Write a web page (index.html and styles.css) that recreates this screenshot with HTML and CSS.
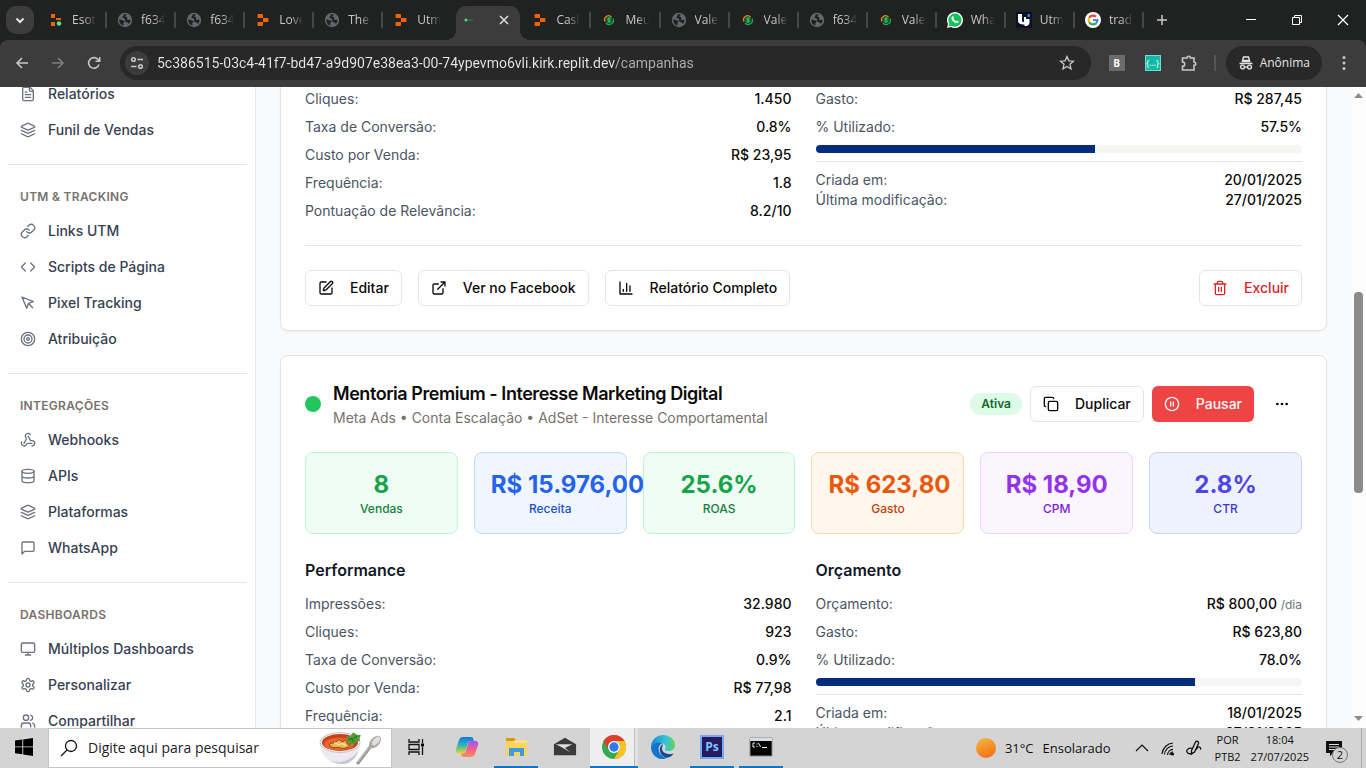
FILE: index.html
```html
<!DOCTYPE html>
<html lang="pt-BR">
<head>
<meta charset="utf-8">
<meta name="viewport" content="width=device-width, initial-scale=1">
<title>Campanhas</title>
<link rel="stylesheet" href="styles.css">
</head>
<body>
<svg class="sprite" aria-hidden="true">
  <symbol id="i-file" viewBox="0 0 24 24"><path d="M15 2H6a2 2 0 0 0-2 2v16a2 2 0 0 0 2 2h12a2 2 0 0 0 2-2V7Z"/><path d="M14 2v4a2 2 0 0 0 2 2h4M10 9H8M16 13H8M16 17H8"/></symbol>
  <symbol id="i-layers" viewBox="0 0 24 24"><path d="m12.83 2.18a2 2 0 0 0-1.66 0L2.6 6.08a1 1 0 0 0 0 1.83l8.58 3.91a2 2 0 0 0 1.66 0l8.58-3.9a1 1 0 0 0 0-1.83Z"/><path d="m22 17.65-9.17 4.16a2 2 0 0 1-1.66 0L2 17.65M22 12.65l-9.17 4.16a2 2 0 0 1-1.66 0L2 12.65"/></symbol>
  <symbol id="i-link" viewBox="0 0 24 24"><path d="M10 13a5 5 0 0 0 7.54.54l3-3a5 5 0 0 0-7.07-7.07l-1.72 1.71"/><path d="M14 11a5 5 0 0 0-7.54-.54l-3 3a5 5 0 0 0 7.07 7.07l1.71-1.71"/></symbol>
  <symbol id="i-code" viewBox="0 0 24 24"><path d="m16 18 6-6-6-6M8 6l-6 6 6 6"/></symbol>
  <symbol id="i-pointer" viewBox="0 0 24 24"><path d="m3 3 7.07 16.97 2.51-7.39 7.39-2.51L3 3zM13 13l6 6"/></symbol>
  <symbol id="i-target" viewBox="0 0 24 24"><circle cx="12" cy="12" r="10"/><circle cx="12" cy="12" r="6"/><circle cx="12" cy="12" r="2"/></symbol>
  <symbol id="i-webhook" viewBox="0 0 24 24"><path d="M18 16.98h-5.99c-1.1 0-1.95.94-2.48 1.9A4 4 0 0 1 2 17c.01-.7.2-1.4.57-2"/><path d="m6 17 3.13-5.78c.53-.97.1-2.18-.5-3.1a4 4 0 1 1 6.89-4.06"/><path d="m12 6 3.13 5.73C15.66 12.7 16.9 13 18 13a4 4 0 0 1 0 8"/></symbol>
  <symbol id="i-database" viewBox="0 0 24 24"><ellipse cx="12" cy="5" rx="9" ry="3"/><path d="M3 5V19A9 3 0 0 0 21 19V5M3 12A9 3 0 0 0 21 12"/></symbol>
  <symbol id="i-message" viewBox="0 0 24 24"><path d="M21 15a2 2 0 0 1-2 2H7l-4 4V5a2 2 0 0 1 2-2h14a2 2 0 0 1 2 2z"/></symbol>
  <symbol id="i-monitor" viewBox="0 0 24 24"><rect x="2" y="3" width="20" height="14" rx="2"/><path d="M8 21h8M12 17v4"/></symbol>
  <symbol id="i-settings" viewBox="0 0 24 24"><path d="M12.22 2h-.44a2 2 0 0 0-2 2v.18a2 2 0 0 1-1 1.73l-.43.25a2 2 0 0 1-2 0l-.15-.08a2 2 0 0 0-2.73.73l-.22.38a2 2 0 0 0 .73 2.73l.15.1a2 2 0 0 1 1 1.72v.51a2 2 0 0 1-1 1.74l-.15.09a2 2 0 0 0-.73 2.73l.22.38a2 2 0 0 0 2.73.73l.15-.08a2 2 0 0 1 2 0l.43.25a2 2 0 0 1 1 1.73V20a2 2 0 0 0 2 2h.44a2 2 0 0 0 2-2v-.18a2 2 0 0 1 1-1.73l.43-.25a2 2 0 0 1 2 0l.15.08a2 2 0 0 0 2.73-.73l.22-.39a2 2 0 0 0-.73-2.73l-.15-.08a2 2 0 0 1-1-1.74v-.5a2 2 0 0 1 1-1.74l.15-.09a2 2 0 0 0 .73-2.73l-.22-.38a2 2 0 0 0-2.73-.73l-.15.08a2 2 0 0 1-2 0l-.43-.25a2 2 0 0 1-1-1.73V4a2 2 0 0 0-2-2z"/><circle cx="12" cy="12" r="3"/></symbol>
  <symbol id="i-users" viewBox="0 0 24 24"><path d="M16 21v-2a4 4 0 0 0-4-4H6a4 4 0 0 0-4 4v2M22 21v-2a4 4 0 0 0-3-3.87M16 3.13a4 4 0 0 1 0 7.75"/><circle cx="9" cy="7" r="4"/></symbol>
  <symbol id="i-edit" viewBox="0 0 24 24"><path d="M12 3H5a2 2 0 0 0-2 2v14a2 2 0 0 0 2 2h14a2 2 0 0 0 2-2v-7"/><path d="M18.375 2.625a1 1 0 0 1 3 3l-9.013 9.014a2 2 0 0 1-.853.505l-2.873.84a.5.5 0 0 1-.62-.62l.84-2.873a2 2 0 0 1 .506-.852z"/></symbol>
  <symbol id="i-external" viewBox="0 0 24 24"><path d="M15 3h6v6M10 14 21 3M18 13v6a2 2 0 0 1-2 2H5a2 2 0 0 1-2-2V8a2 2 0 0 1 2-2h6"/></symbol>
  <symbol id="i-chart" viewBox="0 0 24 24"><path d="M3 3v18h18M18 17V9M13 17V5M8 17v-3"/></symbol>
  <symbol id="i-trash" viewBox="0 0 24 24"><path d="M3 6h18M19 6v14c0 1-1 2-2 2H7c-1 0-2-1-2-2V6M8 6V4c0-1 1-2 2-2h4c1 0 2 1 2 2v2M10 11v6M14 11v6"/></symbol>
  <symbol id="i-copy" viewBox="0 0 24 24"><rect x="8" y="8" width="14" height="14" rx="2"/><path d="M4 16c-1.1 0-2-.9-2-2V4c0-1.1.9-2 2-2h10c1.1 0 2 .9 2 2"/></symbol>
  <symbol id="i-pause" viewBox="0 0 24 24"><circle cx="12" cy="12" r="10"/><path d="M10 15V9M14 15V9"/></symbol>
  <symbol id="i-more" viewBox="0 0 24 24"><circle cx="12" cy="12" r="1"/><circle cx="19" cy="12" r="1"/><circle cx="5" cy="12" r="1"/></symbol>
  <symbol id="f-replit" viewBox="0 0 16 16"><path fill="#f26207" d="M3.500 2h3.500a1 1 0 0 1 1 1v3H3.500a1 1 0 0 1-1-1V3a1 1 0 0 1 1-1ZM8 6h4.500a1 1 0 0 1 1 1v2a1 1 0 0 1-1 1H8ZM3.500 10H8v3a1 1 0 0 1-1 1H3.500a1 1 0 0 1-1-1v-2a1 1 0 0 1 1-1Z"/></symbol>
  <symbol id="f-replit-on" viewBox="0 0 16 16"><path fill="#f26207" d="M3 2h4v4H3zM8 6h5v2H8zM3 10h4v4H3z"/><circle cx="11" cy="11.500" r="2.300" fill="#57e07c"/></symbol>
  <symbol id="f-globe" viewBox="0 0 16 16"><circle cx="8" cy="8" r="7.200" fill="#63676c"/><path fill="#202121" d="M2.300 7.500c1.500 0 2 .5 3 .7 1.400.2 2.200.3 2.200 1.500 0 1-1.200.8-1.200 2 0 .8.200 1.400.3 1.900-2.600-.6-4.600-3-4.300-6.100ZM6.500 2.500c1-.3 2.400-.3 3.400.1-.3.900-1.500.8-1.500 1.700 0 .8 1.500.5 1.800 1.300.4.900-.5 1.500.2 2.100.8.700 1.800-.3 3.200.4-.1 1.500-.7 2.700-1.700 3.700-.8-.2-1-1.300-1.900-1.600-.9-.3-1.600-.2-1.900-1.100-.3-1 .4-1.700-.2-2.300-.7-.7-2.100 0-2.400-1-.3-1.200 1.700-2.200 1-3.300Z"/></symbol>
  <symbol id="f-money" viewBox="0 0 16 16"><circle cx="8" cy="8" r="3.400" fill="#125c31"/><path d="M4 9.500A4 4 0 0 1 10.500 5" fill="none" stroke="#e98a16" stroke-width="1.300"/><path d="M12 6.500A4.200 4.200 0 0 1 5 11" fill="none" stroke="#1ba853" stroke-width="1.300"/><path d="M9.500 6.500C8 5.700 6.500 6.300 6.800 7.300c.3 1 2.400.6 2.600 1.600.2 1.100-1.500 1.400-2.800.7M8 5.300v5.300" fill="none" stroke="#2fd26d"/></symbol>
</svg>

<header class="browser">
  <div class="tabstrip">
    <button class="tab-search" aria-label="Pesquisar guias"><svg viewBox="0 0 16 16"><path d="m4.500 6.500 3.500 3.500 3.500-3.500"/></svg></button>
    <nav class="tabs" aria-label="Guias">
      <a class="tab" href="#"><svg><use href="#f-replit-on"/></svg><span>Esoteri</span></a>
      <a class="tab" href="#"><svg><use href="#f-globe"/></svg><span>f6344c</span></a>
      <a class="tab" href="#"><svg><use href="#f-globe"/></svg><span>f6344c</span></a>
      <a class="tab" href="#"><svg><use href="#f-replit"/></svg><span>Lovel</span></a>
      <a class="tab" href="#"><svg><use href="#f-globe"/></svg><span>The</span></a>
      <a class="tab tab--before" href="#"><svg><use href="#f-replit"/></svg><span>Utm</span></a>
      <a class="tab tab--active" href="#" aria-label="Campanhas"><svg viewBox="0 0 16 16"><circle cx="4" cy="8" r="1.600" fill="#45dc83"/><path d="M6.500 8H11" stroke="#27834f"/></svg><svg class="tab-close" viewBox="0 0 16 16"><path d="m4 4 8 8M12 4l-8 8"/></svg></a>
      <a class="tab" href="#"><svg><use href="#f-replit"/></svg><span>Cash</span></a>
      <a class="tab" href="#"><svg><use href="#f-money"/></svg><span>Meus</span></a>
      <a class="tab" href="#"><svg><use href="#f-globe"/></svg><span>Vale</span></a>
      <a class="tab" href="#"><svg><use href="#f-money"/></svg><span>Vale</span></a>
      <a class="tab" href="#"><svg><use href="#f-globe"/></svg><span>f6344c</span></a>
      <a class="tab" href="#"><svg><use href="#f-money"/></svg><span>Vale</span></a>
      <a class="tab" href="#"><svg viewBox="0 0 16 16"><path fill="#fff" d="M0 16l1-4A8 8 0 1 1 4 15Z"/><path fill="#16c15a" d="M1.500 14.500l.8-3A6.600 6.600 0 1 1 4.500 13.700Z"/><path fill="#fff" d="M5.500 4.300c.8-.5 1 .1 1.500 1.500.2.500-.6 1-.4 1.300.6 1 1.300 1.600 2.300 2.100.4.200.8-.9 1.200-.7 1.500.7 1.900.8 1.500 1.700-.6 1.300-2.200 1.300-4 .3C5.700 9.400 4.300 7.700 4.500 6c.1-.7.500-1.400 1-1.700Z"/></svg><span>What</span></a>
      <a class="tab" href="#"><svg viewBox="0 0 16 16"><path fill="#0b1024" d="M0 0h16v16H0z"/><path fill="#fff" d="M2 2h4v6.500c0 1 .8 1.500 2 1.500V5h2v2h3.500v3.500c0 2.200-1.600 3.500-3.500 3.500H8.500v-1.500C4.500 12.500 2 11.500 2 8.500Z"/><path fill="#1d86e8" d="M11.500 2H14v3h-2.500z"/></svg><span>Utmi</span></a>
      <a class="tab" href="#"><svg viewBox="0 0 16 16"><circle cx="8" cy="8" r="8" fill="#fff"/><g fill="none" stroke-width="2.200"><path stroke="#ea4335" d="M4.200 5.800A4.400 4.400 0 0 1 11 4.800"/><path stroke="#fbbc05" d="M4.200 5.800A4.400 4.400 0 0 0 4.200 10.200"/><path stroke="#34a853" d="M4.200 10.200A4.400 4.400 0 0 0 10.900 11.300"/><path stroke="#4285f4" d="M10.900 11.300A4.400 4.400 0 0 0 12.400 8H8"/></g></svg><span>tradu</span></a>
    </nav>
    <button class="icon-btn" aria-label="Nova guia"><svg viewBox="0 0 16 16"><path d="M8 3v10M3 8h10" stroke-width="1.500"/></svg></button>
    <div class="window-controls">
      <button aria-label="Minimizar"><svg viewBox="0 0 16 16"><path d="M3 7.500h10"/></svg></button>
      <button aria-label="Restaurar"><svg viewBox="0 0 16 16"><path d="M3.500 5.500h7v7h-7zM5.500 5.500v-2h7v7h-2"/></svg></button>
      <button aria-label="Fechar"><svg viewBox="0 0 16 16"><path d="m3 3 10 10M13 3 3 13" stroke-width="1.300"/></svg></button>
    </div>
  </div>
  <div class="toolbar">
    <button class="icon-btn" aria-label="Voltar"><svg viewBox="0 0 16 16"><path d="M14 8H3M8 3 3 8l5 5" stroke-width="1.600"/></svg></button>
    <button class="icon-btn icon-btn--off" aria-label="Avançar"><svg viewBox="0 0 16 16"><path d="M2 8h11M8 3l5 5-5 5" stroke-width="1.600"/></svg></button>
    <button class="icon-btn" aria-label="Recarregar"><svg viewBox="0 0 16 16"><path d="M13 9.500A5.300 5.300 0 1 1 11.800 4.300L13.500 6M13.700 2v4.300H9.500" stroke-width="1.600"/></svg></button>
    <div class="omnibox">
      <button class="site-info" aria-label="Informações do site"><svg viewBox="0 0 16 16"><circle cx="4.500" cy="4.500" r="1.800"/><path d="M8.500 4.500H14M2 11.500h5.500"/><circle cx="11.500" cy="11.500" r="1.800"/></svg></button>
      <input class="url" aria-label="Endereço" value="5c386515-03c4-41f7-bd47-a9d907e38ea3-00-74ypevmo6vli.kirk.replit.dev/campanhas">
      <button class="icon-btn" aria-label="Favoritar"><svg viewBox="0 0 16 16"><path d="m8 1.500 1.900 4.300 4.600.4-3.500 3.100 1 4.600L8 11.500l-4 2.400 1-4.600L1.500 6.200l4.600-.4Z" stroke-width="1.300"/></svg></button>
    </div>
    <div class="extensions">
      <button class="ext ext--b" aria-label="Extensão B">B</button>
      <button class="ext ext--code" aria-label="Extensão de código">{...}</button>
      <button class="icon-btn" aria-label="Extensões"><svg viewBox="0 0 16 16"><path d="M1.500 3H6a1.700 1.700 0 0 1 3.400 0H13v4a1.700 1.700 0 0 1 0 3.400V15H1.500v-3.600a2.200 2.200 0 0 0 0-4.400Z" stroke-width="1.600"/></svg></button>
    </div>
    <button class="incognito"><svg viewBox="0 0 16 16"><path d="M5.500 2h5l1.200 4.500H4.300Z"/><path d="M1.500 8.500h13M5 5.500h6"/><circle cx="4.500" cy="12" r="1.900"/><circle cx="11.500" cy="12" r="1.900"/><path d="M6.400 12h3.200"/></svg>Anônima</button>
    <button class="icon-btn icon-btn--menu" aria-label="Menu"><svg viewBox="0 0 16 16"><g fill="currentColor" stroke="none"><circle cx="8" cy="2.500" r="1.500"/><circle cx="8" cy="8" r="1.500"/><circle cx="8" cy="13.500" r="1.500"/></g></svg></button>
  </div>
</header>

<div class="page">
  <aside class="sidebar">
    <nav class="side-nav">
      <section class="side-group">
        <a href="#"><svg><use href="#i-file"/></svg>Relatórios</a>
        <a href="#"><svg><use href="#i-layers"/></svg>Funil de Vendas</a>
      </section>
      <section class="side-group">
        <h2>UTM &amp; TRACKING</h2>
        <a href="#"><svg><use href="#i-link"/></svg>Links UTM</a>
        <a href="#"><svg><use href="#i-code"/></svg>Scripts de Página</a>
        <a href="#"><svg><use href="#i-pointer"/></svg>Pixel Tracking</a>
        <a href="#"><svg><use href="#i-target"/></svg>Atribuição</a>
      </section>
      <section class="side-group">
        <h2>INTEGRAÇÕES</h2>
        <a href="#"><svg><use href="#i-webhook"/></svg>Webhooks</a>
        <a href="#"><svg><use href="#i-database"/></svg>APIs</a>
        <a href="#"><svg><use href="#i-layers"/></svg>Plataformas</a>
        <a href="#"><svg><use href="#i-message"/></svg>WhatsApp</a>
      </section>
      <section class="side-group">
        <h2>DASHBOARDS</h2>
        <a href="#"><svg><use href="#i-monitor"/></svg>Múltiplos Dashboards</a>
        <a href="#"><svg><use href="#i-settings"/></svg>Personalizar</a>
        <a href="#"><svg><use href="#i-users"/></svg>Compartilhar</a>
      </section>
    </nav>
  </aside>

  <main class="content">
    <article class="card card--cut">
      <div class="details">
        <dl class="rows">
          <div><dt>Cliques:</dt><dd>1.450</dd></div>
          <div><dt>Taxa de Conversão:</dt><dd>0.8%</dd></div>
          <div><dt>Custo por Venda:</dt><dd>R$ 23,95</dd></div>
          <div><dt>Frequência:</dt><dd>1.8</dd></div>
          <div><dt>Pontuação de Relevância:</dt><dd>8.2/10</dd></div>
        </dl>
        <div class="budget">
          <dl class="rows">
            <div><dt>Gasto:</dt><dd>R$ 287,45</dd></div>
            <div><dt>% Utilizado:</dt><dd>57.5%</dd></div>
          </dl>
          <div class="bar" role="progressbar" aria-label="Utilizado" aria-valuenow="57.5"><div style="width:57.5%"></div></div>
          <dl class="rows rows--dates">
            <div><dt>Criada em:</dt><dd>20/01/2025</dd></div>
            <div><dt>Última modificação:</dt><dd>27/01/2025</dd></div>
          </dl>
        </div>
      </div>
      <footer class="card-actions">
        <button class="btn"><svg><use href="#i-edit"/></svg>Editar</button>
        <button class="btn"><svg><use href="#i-external"/></svg>Ver no Facebook</button>
        <button class="btn"><svg><use href="#i-chart"/></svg>Relatório Completo</button>
        <button class="btn btn--delete"><svg><use href="#i-trash"/></svg>Excluir</button>
      </footer>
    </article>

    <article class="card">
      <header class="card-head">
        <span class="status-dot"></span>
        <div class="card-title">
          <h3>Mentoria Premium - Interesse Marketing Digital</h3>
          <p>Meta Ads • Conta Escalação • AdSet - Interesse Comportamental</p>
        </div>
        <span class="badge">Ativa</span>
        <button class="btn"><svg><use href="#i-copy"/></svg>Duplicar</button>
        <button class="btn btn--pause"><svg><use href="#i-pause"/></svg>Pausar</button>
        <button class="btn btn--ghost" aria-label="Mais opções"><svg><use href="#i-more"/></svg></button>
      </header>
      <div class="metrics">
        <div class="metric metric--green"><strong>8</strong><span>Vendas</span></div>
        <div class="metric metric--blue"><strong>R$ 15.976,00</strong><span>Receita</span></div>
        <div class="metric metric--green"><strong>25.6%</strong><span>ROAS</span></div>
        <div class="metric metric--orange"><strong>R$ 623,80</strong><span>Gasto</span></div>
        <div class="metric metric--purple"><strong>R$ 18,90</strong><span>CPM</span></div>
        <div class="metric metric--indigo"><strong>2.8%</strong><span>CTR</span></div>
      </div>
      <div class="details">
        <section>
          <h4>Performance</h4>
          <dl class="rows">
            <div><dt>Impressões:</dt><dd>32.980</dd></div>
            <div><dt>Cliques:</dt><dd>923</dd></div>
            <div><dt>Taxa de Conversão:</dt><dd>0.9%</dd></div>
            <div><dt>Custo por Venda:</dt><dd>R$ 77,98</dd></div>
            <div><dt>Frequência:</dt><dd>2.1</dd></div>
          </dl>
        </section>
        <section>
          <h4>Orçamento</h4>
          <div class="budget">
            <dl class="rows">
              <div><dt>Orçamento:</dt><dd>R$ 800,00 <small>/dia</small></dd></div>
              <div><dt>Gasto:</dt><dd>R$ 623,80</dd></div>
              <div><dt>% Utilizado:</dt><dd>78.0%</dd></div>
            </dl>
            <div class="bar" role="progressbar" aria-label="Utilizado" aria-valuenow="78"><div style="width:78%"></div></div>
            <dl class="rows rows--dates">
              <div><dt>Criada em:</dt><dd>18/01/2025</dd></div>
              <div><dt>Última modificação:</dt><dd>27/01/2025</dd></div>
            </dl>
          </div>
        </section>
      </div>
    </article>
  </main>

  <div class="scrollbar" aria-hidden="true">
    <svg viewBox="0 0 15 16"><path d="M7.500 6 12 11H3Z"/></svg>
    <div class="scroll-before"></div>
    <div class="scroll-thumb"></div>
    <div class="scroll-after"></div>
    <svg viewBox="0 0 15 16"><path d="M7.500 9 12 4H3Z"/></svg>
  </div>
</div>

<footer class="taskbar">
  <button class="task" aria-label="Iniciar"><svg viewBox="0 0 16 16"><path d="M0 2.300 6.500 1.400v6.100H0ZM7.300 1.300 16 0v7.500H7.300ZM0 8.300h6.500v6.200L0 13.600ZM7.300 8.300H16V16l-8.700-1.300Z"/></svg></button>
  <label class="search">
    <svg class="search-icon" viewBox="0 0 18 18"><circle cx="11" cy="7" r="5.500"/><path d="m7 11-6 6"/></svg>
    <input aria-label="Pesquisar no Windows" placeholder="Digite aqui para pesquisar">
    <svg class="soup" viewBox="0 0 64 34">
      <path fill="#eceaf0" d="M1 12c0 10 7 17 13 20 4 1.500 11 1.500 15 0 8-4 12-11 12-20Z"/>
      <path fill="#c9c6d4" d="M12 30c8 3 20 0 27-10-2 7-6 10-10 12-4 1.500-11 1.500-17-2Z"/>
      <ellipse cx="21" cy="11.500" rx="20" ry="10" fill="#f5f3f4" stroke="#c5c0c6"/>
      <ellipse cx="21" cy="11.500" rx="18" ry="8.500" fill="#c93f1c"/>
      <ellipse cx="20" cy="13" rx="15" ry="6.500" fill="#e9652b"/>
      <path d="M10 14c3-4 5 0 8-4s4 3 7 0 2 4 5 4-4 5-8 3-7 2-12-3Z" fill="#e9b653" stroke="#8a4a18"/>
      <path d="M15 12c3 0 4 3 7 1s3 2 5 1" fill="none" stroke="#fae09b" stroke-width="1.500"/>
      <path d="M27 7c2-4 4 0 6-4s3 2 7 1-1 4 1 5-5 1-5 4-3-2-5 1 0-4-4-7Z" fill="#4f9a32"/>
      <path d="M29 8c3 1 6-1 9-3M32 7l3 4" stroke="#246b1e" fill="none"/>
      <path d="m39 32 12-16" stroke="#96918f" stroke-width="3" stroke-linecap="round"/>
      <path d="m39 31 12-16" stroke="#d8d4d1" stroke-linecap="round"/>
      <ellipse cx="56" cy="11" rx="4.500" ry="7.500" fill="#aaa6a4" transform="rotate(42 56 11)"/>
      <ellipse cx="57" cy="10" rx="2.800" ry="5.500" fill="#e1dedc" transform="rotate(42 57 10)"/>
    </svg>
  </label>
  <button class="task" aria-label="Visão de tarefas"><svg viewBox="0 0 18 18"><path d="M2 1v3h10V1M2 17v-3h10v3M2 6.500h10v5H2zM15.500 1v4M15.500 9v8" fill="none" stroke="#111" stroke-width="1.300"/><path d="M14 5.500h3v3h-3z"/></svg></button>
  <div class="apps">
    <button class="task" aria-label="Copilot"><svg class="app-icon" viewBox="0 0 24 24"><defs><linearGradient id="cpA" x1="0" y1="0" x2="0" y2="1"><stop stop-color="#1777e8"/><stop offset=".5" stop-color="#27b9b3"/><stop offset="1" stop-color="#f2d522"/></linearGradient><linearGradient id="cpB" x1="0" y1="0" x2="0" y2="1"><stop stop-color="#9a5cf0"/><stop offset=".5" stop-color="#f05c93"/><stop offset="1" stop-color="#ff9255"/></linearGradient></defs><path fill="url(#cpA)" d="M8 2h8c2 0 2.500 2 3 4h-3c-2 0-3 1-3.500 3l-2 7c-.7 2-1.500 2.500-3 2.500H3.500C1 18.500.5 16 1 14L4 5c.7-2 1.800-3 4-3Z"/><path fill="url(#cpB)" d="M16 22H9c-2 0-2.500-1.500-3-3.500h2c1.800 0 2.500-1 3-3l2-7C13.500 7 14 6 16 6h4.500c2.500 0 3 2 2.500 4l-3 9c-.7 2-2 3-4 3Z"/></svg></button>
    <button class="task task--open" aria-label="Explorador"><svg class="app-icon" viewBox="0 0 24 24"><path fill="#d9980d" d="M2 3h8l2 2v4H2Z"/><path fill="#ffd45c" d="M2 6h21v15H2Z"/><path fill="#fae08c" d="M11 5h12v3H9Z"/><path fill="#3d9ade" d="M5 13h15v8h-4v-4h-6v4H5Z"/></svg></button>
    <button class="task" aria-label="Correio"><svg class="app-icon" viewBox="0 0 26 24"><path fill="#3b3b3b" d="M1 9 13 2l12 7v12H1Z"/><path fill="#ddd" d="m3 9 18 0-8 4 6 5-10-6Z"/></svg></button>
    <button class="task task--open task--current" aria-label="Chrome"><svg class="app-icon" viewBox="0 0 24 24"><circle cx="12" cy="12" r="12" fill="#35a853"/><path fill="#e33b2e" d="M1.600 6A12 12 0 0 1 22.400 6H12a6 6 0 0 0-5.200 9Z"/><path fill="#fcc31e" d="M22.400 6A12 12 0 0 1 12 24l5.200-9A6 6 0 0 0 12 6Z"/><circle cx="12" cy="12" r="6" fill="#fff"/><circle cx="12" cy="12" r="4.700" fill="#3279e9"/></svg></button>
    <button class="task" aria-label="Edge"><svg class="app-icon" viewBox="0 0 24 24"><defs><linearGradient id="edA" x1="0" x2="1"><stop stop-color="#188bd8"/><stop offset=".6" stop-color="#33c4d8"/><stop offset="1" stop-color="#62d653"/></linearGradient></defs><path fill="url(#edA)" d="M0 12C0 5 5.500 0 12 0s12 4.500 12 10c0 4-3 6-6.500 6-3 0-4-1-3.500-2 1-1.500 1-3.500-1-5C9 6.500 3 7 0 12Z"/><path fill="#1475cb" d="M0 12C2 7 8 6 12 8.500c-3 0-4.500 3-4.300 6C8 19 12 23 17 22.500 9 27 0 21 0 12Z"/><path fill="#174a91" d="M12 9c-6 3-3 14 5 13.500 2.500-.5 4.500-2 5.500-4C18 20 11 18.500 11 13.500 11 11.500 12 10.500 12 9Z"/></svg></button>
    <button class="task task--open" aria-label="Photoshop"><span class="ps">Ps</span></button>
    <button class="task task--open" aria-label="Prompt de comando"><svg class="app-icon" viewBox="0 0 24 24"><path fill="#050505" stroke="#85898c" d="M1 3h22v18H1z"/><path fill="#d9dde0" d="M1 3h22v3H1z"/><path stroke="#eee" fill="none" d="M6 8H4v4h2M8 8.500v1M8 11v1M9.500 8l2 4M13 12.500h5"/></svg></button>
  </div>
  <div class="tray">
    <button class="weather"><span class="sun"></span><span>31°C</span><span>Ensolarado</span></button>
    <button class="tray-icon" aria-label="Ícones ocultos"><svg viewBox="0 0 16 16"><path d="m2 11 6-6 6 6"/></svg></button>
    <button class="tray-icon" aria-label="Rede"><svg viewBox="0 0 16 16"><path d="M2 14A12 12 0 0 1 13 3M4.500 14.500A9 9 0 0 1 13 6M7.500 15A6 6 0 0 1 13 9.300M10 15a3 3 0 0 1 3-3"/><circle cx="12.500" cy="14" r="1" fill="#111"/></svg></button>
    <button class="tray-icon" aria-label="Caneta"><svg viewBox="0 0 16 16"><path d="M5.500 10.500 9.500 2c1-1.500 3.500-.5 3 1.500L8.500 12l-3 2ZM6.500 8.500C3 7.500 0 9.500 1 12c1 2.500 4 2 5.500.5M9.500 10c1.500-1 2-3.500 4-3 1.500.5 1.500 2 .5 2.500" stroke-width="1.300"/></svg></button>
    <button class="tray-text"><span>POR</span><span>PTB2</span></button>
    <button class="tray-text tray-text--clock"><span>18:04</span><span>27/07/2025</span></button>
    <button class="notify" aria-label="Notificações"><svg viewBox="0 0 18 18"><path fill="#111" d="M1 2h16v12H8l-3 3v-3H1Z"/><path d="M4 5.500h10M4 8h10M4 10.500h7" stroke="#ddd"/></svg><span class="notify-count">2</span></button>
  </div>
</footer>
</body>
</html>
```

FILE: styles.css
```css
* { box-sizing: border-box; }

body {
  margin: 0;
  height: 100vh;
  display: flex;
  flex-direction: column;
  overflow: hidden;
  font-family: Inter, "Liberation Sans", sans-serif;
  font-size: 14px;
  line-height: 20px;
  color: #0c0a09;
}

h2, h3, h4, p, dl, dd { margin: 0; }
a { color: inherit; text-decoration: none; }
button, input { font: inherit; color: inherit; }
button { border: 0; padding: 0; background: none; cursor: pointer; }
svg { flex: none; width: 16px; height: 16px; }
.sprite { position: absolute; width: 0; height: 0; }

/* Browser chrome */
.browser, .taskbar { flex: none; font-family: "Open Sans", "Noto Sans", sans-serif; }
.browser { background: #202121; color: #c7c7c7; }
.browser button svg { fill: none; stroke: currentColor; }

.tabstrip { display: flex; align-items: center; height: 40px; padding-left: 6px; }
.tab-search {
  display: flex;
  align-items: center;
  justify-content: center;
  width: 28px;
  height: 28px;
  margin-right: 4px;
  border-radius: 10px;
  background: #3c3c3c;
  color: #e3e3e3;
}
.tab-search svg { stroke-width: 2; }
.tabs { flex: 0 1 1106px; min-width: 0; display: flex; height: 40px; }
.tab {
  flex: 1 1 0;
  min-width: 0;
  display: flex;
  align-items: center;
  gap: 8px;
  padding-left: 10px;
  font-size: 12px;
  background: linear-gradient(#454646, #454646) right 0 center / 2px 16px no-repeat;
}
.tab span {
  width: 24px;
  overflow: hidden;
  white-space: nowrap;
  mask-image: linear-gradient(90deg, #000 50%, transparent);
}
.tab--before { background: none; }
.tab--active {
  position: relative;
  flex: none;
  align-self: flex-end;
  justify-content: space-between;
  width: 64px;
  height: 34px;
  margin: 0 2px 0 4px;
  padding: 0 8px 6px 6px;
  border-radius: 10px 10px 0 0;
  background: #3c3c3c;
  color: #e3e3e3;
}
.tab--active::before,
.tab--active::after { content: ""; position: absolute; bottom: 0; width: 10px; height: 10px; }
.tab--active::before { right: 100%; background: radial-gradient(circle at 0 0, transparent 10px, #3c3c3c 10px); }
.tab--active::after { left: 100%; background: radial-gradient(circle at 100% 0, transparent 10px, #3c3c3c 10px); }
.tab-close { fill: none; stroke: currentColor; stroke-width: 1.500; }

.window-controls { display: flex; margin-left: auto; color: #fff; }
.window-controls button { width: 46px; height: 40px; display: flex; align-items: center; justify-content: center; }

.icon-btn { display: flex; align-items: center; justify-content: center; width: 36px; height: 34px; }
.icon-btn--off { color: #7d7d7d; }
.icon-btn--menu { width: 24px; margin-left: 10px; }

.toolbar {
  display: flex;
  align-items: center;
  height: 47px;
  padding: 0 10px 1px 4px;
  border-radius: 8px 8px 0 0;
  background: #3c3c3c;
}
.omnibox {
  flex: 1;
  display: flex;
  align-items: center;
  gap: 8px;
  height: 34px;
  margin-left: 8px;
  padding: 0 6px 0 5px;
  border-radius: 17px;
  background: #282828;
}
.site-info { display: flex; align-items: center; justify-content: center; width: 24px; height: 24px; border-radius: 12px; background: #3c3c3c; }
.site-info svg { stroke-width: 1.500; }
.url {
  flex: 1;
  min-width: 0;
  padding: 0;
  border: 0;
  outline: 0;
  font-family: Roboto, "Open Sans", sans-serif;
  font-size: 14px;
  background: linear-gradient(90deg, #e8e8e8 458px, #b0b0b0 458px);
  background-clip: text;
  -webkit-background-clip: text;
  color: transparent;
}
.extensions { display: flex; align-items: center; gap: 20px; height: 16px; margin-left: 18px; padding-right: 16px; border-right: 2px solid #555; }
.extensions .icon-btn { width: 17px; }
.ext { width: 16px; height: 16px; font-size: 10px; font-weight: 700; line-height: 16px; }
.ext--b { background: #6b6b6b; color: #fff; }
.ext--code { border: 1px solid #6fe0cf; background: #14b8a6; color: #b8f5ec; font-size: 8px; line-height: 12px; }
.incognito {
  display: flex;
  align-items: center;
  gap: 6px;
  height: 34px;
  margin-left: 10px;
  padding: 0 12px;
  border-radius: 17px;
  background: #282828;
  color: #e3e3e3;
  font-size: 12px;
}
.incognito svg { stroke-width: 1.400; }

/* Page */
.page { flex: 1; min-height: 0; display: flex; background: #f9fafb; }

.sidebar { flex: none; width: 256px; overflow: hidden; border-right: 1px solid #e5e7eb; background: #fff; }
.side-nav { margin-top: -11px; padding: 0 8px; }
.side-group { padding-bottom: 16px; }
.side-group + .side-group { padding-top: 16px; border-top: 1px solid #e5e5e5; }
.side-group h2 { padding: 8px 12px; font-size: 12px; line-height: 16px; font-weight: 600; letter-spacing: 0.025em; color: #78716c; }
.side-group a { display: flex; align-items: center; gap: 12px; padding: 8px 12px; font-weight: 500; color: #374151; }
.side-group svg, .btn svg { fill: none; stroke: currentColor; stroke-width: 2; stroke-linecap: round; stroke-linejoin: round; }
.side-group svg { color: #6b7280; }

.content { flex: 1; min-width: 0; display: flex; flex-direction: column; gap: 24px; padding: 0 24px; overflow: hidden; }
.card { flex: none; padding: 24px; border: 1px solid #e5e5e5; border-radius: 8px; background: #fff; box-shadow: 0 1px 2px rgba(0, 0, 0, 0.05); }
.card--cut { padding-top: 2px; border-top: 0; border-radius: 0 0 8px 8px; }

.details { display: grid; grid-template-columns: minmax(0, 1fr) minmax(0, 1fr); gap: 24px; }
.details h4 { margin-bottom: 12px; font-size: 16px; line-height: 24px; font-weight: 600; color: #111827; }
.rows { display: flex; flex-direction: column; gap: 8px; }
.rows div { display: flex; justify-content: space-between; }
.rows dt { color: #4b5563; }
.rows dd { font-weight: 500; }
.rows small { font-size: 12px; line-height: 16px; font-weight: 400; color: #6b7280; }
.budget { display: flex; flex-direction: column; gap: 8px; }
.bar { height: 8px; border-radius: 4px; overflow: hidden; background: #f5f5f4; }
.bar div { height: 100%; background: #062c7e; }
.rows--dates { gap: 0; padding-top: 8px; border-top: 1px solid #e5e5e5; }

.card-actions { display: flex; gap: 16px; margin-top: 24px; padding-top: 24px; border-top: 1px solid #e5e5e5; }
.btn {
  flex: none;
  display: flex;
  align-items: center;
  justify-content: center;
  gap: 16px;
  height: 36px;
  padding: 0 12px;
  border: 1px solid #e5e5e5;
  border-radius: 6px;
  background: #fff;
  font-weight: 500;
  white-space: nowrap;
}
.btn--delete { margin-left: auto; color: #dc2626; }
.btn--pause { border: 0; background: #ef4444; color: #fafaf9; }
.btn--ghost { border: 0; }

.card-head { display: flex; align-items: center; gap: 8px; margin-bottom: 24px; }
.status-dot { flex: none; width: 16px; height: 16px; margin-right: 4px; border-radius: 8px; background: #22c55e; }
.card-title { flex: 1; min-width: 0; }
.card-title h3 { font-size: 18px; line-height: 28px; font-weight: 600; letter-spacing: -0.025em; }
.card-title p { color: #78716c; }
.badge { padding: 3px 11px; border-radius: 11px; background: #dcfce7; color: #166534; font-size: 12px; line-height: 16px; font-weight: 600; }

.metrics { display: grid; grid-template-columns: repeat(6, minmax(0, 1fr)); gap: 16px; margin-bottom: 24px; }
.metric { padding: 16px; border: 1px solid; border-radius: 8px; text-align: center; }
.metric strong { display: block; font-size: 24px; line-height: 32px; font-weight: 700; white-space: nowrap; }
.metric span { display: block; font-size: 12px; line-height: 16px; font-weight: 500; }
.metric--green { background: #f0fdf4; border-color: #bbf7d0; color: #16a34a; }
.metric--green span { color: #15803d; }
.metric--blue { background: #eff6ff; border-color: #bfdbfe; color: #2563eb; }
.metric--blue span { color: #1d4ed8; }
.metric--orange { background: #fff7ed; border-color: #fed7aa; color: #ea580c; }
.metric--orange span { color: #c2410c; }
.metric--purple { background: #faf5ff; border-color: #e9d5ff; color: #9333ea; }
.metric--purple span { color: #7e22ce; }
.metric--indigo { background: #eef2ff; border-color: #c7d2fe; color: #4f46e5; }
.metric--indigo span { color: #4338ca; }

.scrollbar { flex: none; display: flex; flex-direction: column; align-items: center; width: 15px; background: #fcfcfc; }
.scrollbar svg { width: 15px; fill: #8b8b8b; }
.scroll-before { flex: 189; }
.scroll-thumb { flex: 201; width: 9px; border-radius: 4px; background: #8b8b8b; }
.scroll-after { flex: 219; }

/* Taskbar */
.taskbar { display: flex; align-items: stretch; height: 40px; background: #d4d4d4; color: #111; }
.task { display: flex; align-items: center; justify-content: center; width: 48px; border-bottom: 2px solid transparent; }
.task--open { border-image: linear-gradient(90deg, transparent 4px, #0078d7 4px, #0078d7 44px, transparent 44px) 2; }
.task--current { border-image: none; border-bottom-color: #0078d7; background: linear-gradient(90deg, #eee 44px, #bbb 44px, #bbb 45px, #e2e2e2 45px); }
.task svg { width: 18px; height: 18px; }
.task .app-icon { width: 24px; height: 24px; }
.apps { display: flex; gap: 1px; margin-left: 3px; }
.ps { width: 24px; height: 24px; border: 2px solid #75aaf0; background: #271b60; color: #80c4ff; font-size: 12px; line-height: 20px; font-weight: 700; }

.search { display: flex; align-items: center; width: 344px; padding: 0 8px 0 11px; border: 1px solid #c4c4c4; background: #fff; }
.search-icon { width: 18px; height: 18px; fill: none; stroke: #111; stroke-width: 1.300; }
.search input { flex: 1; min-width: 0; margin-left: 10px; padding: 0; border: 0; outline: 0; font-size: 14px; }
.search input::placeholder { color: #222; opacity: 1; }
.soup { width: 64px; height: 34px; }

.tray { display: flex; align-items: center; margin-left: auto; padding-right: 4px; }
.weather { display: flex; align-items: center; gap: 9px; margin-right: 18px; font-size: 13px; }
.sun { width: 20px; height: 20px; border-radius: 10px; background: linear-gradient(160deg, #f6b73c, #f26a12); }
.tray-icon { display: flex; align-items: center; justify-content: center; width: 26px; height: 40px; }
.tray-icon svg { fill: none; stroke: #111; stroke-width: 1.200; }
.tray-text { display: flex; flex-direction: column; align-items: center; margin-left: 8px; font-size: 11px; line-height: 17px; }
.tray-text--clock { margin-left: 10px; }
.notify { position: relative; display: flex; align-items: center; height: 40px; margin-left: 16px; padding-right: 18px; border-right: 1px solid #aaa; }
.notify svg { width: 18px; height: 18px; }
.notify-count { position: absolute; left: 7px; top: 19px; width: 16px; height: 16px; border: 1px solid #777; border-radius: 8px; background: #d4d4d4; font-size: 11px; line-height: 14px; }
```
